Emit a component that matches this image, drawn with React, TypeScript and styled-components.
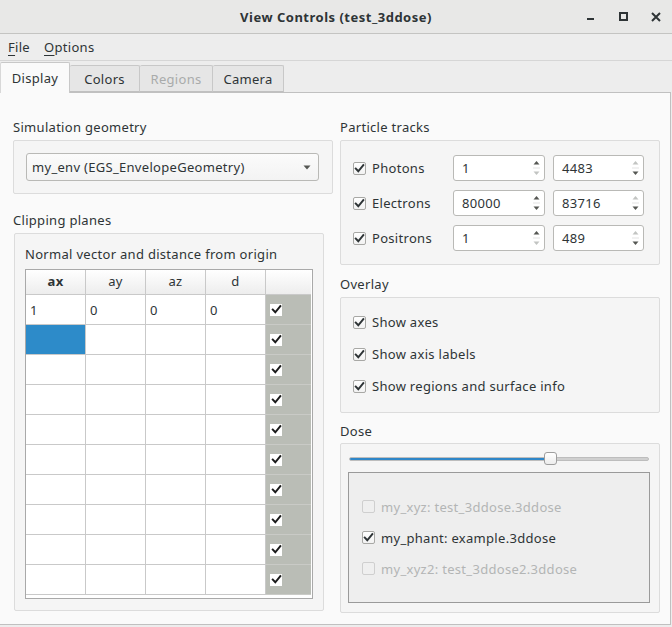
import React from "react";
import styled, { createGlobalStyle } from "styled-components";

const Global = createGlobalStyle`
  html, body { margin: 0; padding: 0; background: #ededed; }
  body {
    font-family: "Noto Sans", "DejaVu Sans", sans-serif;
    font-size: 13px;
    letter-spacing: 0.3px;
    color: #2e3436;
  }
  * { box-sizing: border-box; }
`;

const Window = styled.div`
  width: 672px;
  height: 627px;
  display: flex;
  flex-direction: column;
  background: #ededed;
`;

const TitleBar = styled.div`
  height: 34px;
  flex: none;
  display: grid;
  grid-template-columns: 1fr auto 1fr;
  align-items: center;
  background: #e8e8e7;
  border-bottom: 1px solid #c4c4c2;
`;

const Title = styled.div`
  grid-column: 2;
  font-weight: bold;
  font-size: 13px;
  letter-spacing: 0.5px;
  color: #2e3436;
`;

const WinButtons = styled.div`
  grid-column: 3;
  display: flex;
  justify-content: flex-end;
  align-items: center;
  height: 100%;
`;

const WinButton = styled.div`
  width: 32px;
  height: 100%;
  display: flex;
  align-items: center;
  justify-content: center;
`;

const MenuBar = styled.div`
  height: 27px;
  flex: none;
  display: flex;
  align-items: center;
  padding-left: 8px;
  gap: 14px;
  border-bottom: 1px solid #d6d6d6;
  background: #ededed;
`;

const MenuItem = styled.span`
  font-size: 13px;
  color: #2e3436;
  u { text-underline-offset: 3px; }
`;

const TabBar = styled.div`
  height: 31px;
  flex: none;
  display: flex;
  align-items: flex-end;
  position: relative;
  z-index: 1;
`;

const Tab = styled.div<{ $w: number; $active?: boolean; $disabled?: boolean }>`
  width: ${(p) => p.$w}px;
  height: ${(p) => (p.$active ? 31 : 27)}px;
  margin-bottom: ${(p) => (p.$active ? -1 : 0)}px;
  display: flex;
  align-items: center;
  justify-content: center;
  padding-top: ${(p) => (p.$active ? 0 : 1)}px;
  background: ${(p) => (p.$active ? "#fafafa" : "#e6e6e6")};
  border: 1px solid #c8c8c8;
  border-bottom: ${(p) => (p.$active ? "none" : "1px solid #c0c0c0")};
  border-left: ${(p) => (p.$active ? "1px solid #d8d8d8" : "none")};
  border-radius: 2px 2px 0 0;
  color: ${(p) => (p.$disabled ? "#a9abab" : "#2e3436")};
`;

const Pane = styled.div`
  width: 671px;
  height: 533px;
  flex: none;
  background: #fafafa;
  border: 1px solid #c0c0c0;
  border-left: none;
  display: flex;
  gap: 7px;
  padding: 25px 10px 0 13px;
  align-items: flex-start;
`;

const Column = styled.div`
  width: 320px;
  flex: none;
  display: flex;
  flex-direction: column;
`;

const SectionLabel = styled.div<{ $top?: number; $bottom?: number }>`
  height: 18px;
  line-height: 18px;
  margin-top: ${(p) => p.$top ?? 0}px;
  margin-bottom: ${(p) => p.$bottom ?? 4}px;
`;

const Group = styled.div<{ $pad: string; $ml?: number; $mr?: number }>`
  background: #f5f5f5;
  border: 1px solid #dcdcdc;
  border-radius: 2px;
  padding: ${(p) => p.$pad};
  margin-left: ${(p) => p.$ml ?? 0}px;
  margin-right: ${(p) => p.$mr ?? 0}px;
`;

const Combo = styled.div`
  height: 28px;
  border: 1px solid #b9b9b6;
  border-radius: 3px;
  background: linear-gradient(#fbfbfb, #f3f3f3);
  display: flex;
  align-items: center;
  justify-content: space-between;
  padding: 0 7px 0 5px;
`;

const InnerLabel = styled.div`
  height: 18px;
  line-height: 18px;
  margin-bottom: 6px;
`;

const Table = styled.div`
  height: 330px;
  border: 1px solid #a9a9a9;
  background: #ffffff;
  display: flex;
  flex-direction: column;
`;

const GridRow = styled.div<{ $h: number }>`
  display: grid;
  grid-template-columns: 60px 60px 60px 60px 45px;
  height: ${(p) => p.$h}px;
  flex: none;
`;

const HeadCell = styled.div<{ $bold?: boolean; $last?: boolean }>`
  display: flex;
  align-items: center;
  justify-content: center;
  background: linear-gradient(#ffffff, #ededed);
  border-right: ${(p) => (p.$last ? "none" : "1px solid #c9c9c9")};
  border-bottom: 1px solid #c9c9c9;
  font-weight: ${(p) => (p.$bold ? "bold" : "normal")};
  padding-bottom: 2px;
`;

const Cell = styled.div<{ $selected?: boolean }>`
  display: flex;
  align-items: center;
  padding-left: 4px;
  border-right: 1px solid #c9c9c9;
  border-bottom: 1px solid #c9c9c9;
  background: ${(p) => (p.$selected ? "#2d8bc9" : "#ffffff")};
`;

const CheckCell = styled.div`
  display: flex;
  align-items: center;
  padding-left: 4px;
  background: #babdb6;
  border-bottom: 1px solid #c9cac6;
`;

const TableCheck = styled.span`
  width: 12px;
  height: 12px;
  background: #ffffff;
  display: inline-flex;
  align-items: center;
  justify-content: center;
`;

const TrackRow = styled.div`
  display: flex;
  height: 26px;
  align-items: center;
`;

const TrackRows = styled.div`
  display: flex;
  flex-direction: column;
  gap: 9px;
`;

const TrackLabel = styled.div`
  width: 100px;
  flex: none;
`;

const CheckLine = styled.label<{ $disabled?: boolean }>`
  display: flex;
  align-items: center;
  gap: 6px;
  height: 20px;
  color: ${(p) => (p.$disabled ? "#b3b5b5" : "#2e3436")};
`;

const Box = styled.span<{ $disabled?: boolean }>`
  width: 13px;
  height: 13px;
  flex: none;
  border: 1px solid ${(p) => (p.$disabled ? "#cfcfcf" : "#a8a8a5")};
  border-radius: 2px;
  background: ${(p) => (p.$disabled ? "#efefef" : "linear-gradient(#ffffff, #f2f2f2)")};
  display: inline-flex;
  align-items: center;
  justify-content: center;
`;

const Spin = styled.div<{ $w: number; $ml: number }>`
  width: ${(p) => p.$w}px;
  margin-left: ${(p) => p.$ml}px;
  flex: none;
  height: 26px;
  border: 1px solid #b9b9b6;
  border-radius: 3px;
  background: #ffffff;
  display: flex;
  align-items: center;
  justify-content: space-between;
  padding-left: 8px;
`;

const SpinArrows = styled.div`
  width: 16px;
  height: 100%;
  display: flex;
  align-items: center;
  justify-content: center;
`;

const OverlayRows = styled.div`
  display: flex;
  flex-direction: column;
  gap: 12px;
`;

const SliderWrap = styled.div`
  position: relative;
  height: 13px;
  margin: 0 0 7px 1px;
  display: flex;
  align-items: center;
`;

const Groove = styled.div`
  width: 300px;
  height: 4px;
  border-radius: 2px;
  background: #cfcfcf;
  border: 1px solid #bdbdbd;
  overflow: hidden;
`;

const GrooveFill = styled.div`
  height: 100%;
  background: #2e86c8;
`;

const Handle = styled.div`
  position: absolute;
  top: 0;
  width: 13px;
  height: 13px;
  border: 1px solid #9e9e9e;
  border-radius: 3px;
  background: linear-gradient(#ffffff, #ededed);
`;

const DoseFrame = styled.div`
  height: 131px;
  border: 1px solid #9a9a9a;
  background: #eeeeee;
  display: flex;
  flex-direction: column;
  justify-content: center;
  gap: 11px;
  padding-left: 13px;
`;

const Check = ({ color = "#2e3436" }: { color?: string }) => (
  <svg width="11" height="11" viewBox="0 0 11 11">
    <path d="M1.8 5.6 L4.3 8.3 L9.3 2.2" fill="none" stroke={color} strokeWidth="2" strokeLinecap="square" />
  </svg>
);

const CheckBox = ({ checked, disabled }: { checked?: boolean; disabled?: boolean }) => (
  <Box $disabled={disabled}>{checked ? <Check /> : null}</Box>
);

const Arrows = ({ upOn, downOn }: { upOn: boolean; downOn: boolean }) => (
  <SpinArrows>
    <svg width="9" height="20" viewBox="0 0 9 20">
      <path d="M1.5 6.5 L4.5 3 L7.5 6.5 Z" fill={upOn ? "#555753" : "#c2c4c2"} />
      <path d="M1 10 H8" stroke="#e3e3e3" strokeWidth="1" />
      <path d="M1.5 13.5 L4.5 17 L7.5 13.5 Z" fill={downOn ? "#555753" : "#c2c4c2"} />
    </svg>
  </SpinArrows>
);

const tracks = [
  { name: "Photons", a: "1", b: "4483", arr: [[true, false], [false, true]] },
  { name: "Electrons", a: "80000", b: "83716", arr: [[true, true], [false, true]] },
  { name: "Positrons", a: "1", b: "489", arr: [[true, false], [false, true]] },
];

const rows = [["1", "0", "0", "0"], ...Array.from({ length: 9 }, () => ["", "", "", ""])];

export default function App() {
  return (
    <>
      <Global />
      <Window>
        <TitleBar>
          <Title>View Controls (test_3ddose)</Title>
          <WinButtons>
            <WinButton>
              <svg width="10" height="10" viewBox="0 0 10 10">
                <rect x="0" y="6" width="7" height="2" fill="#2e3436" />
              </svg>
            </WinButton>
            <WinButton>
              <svg width="10" height="10" viewBox="0 0 10 10">
                <rect x="1" y="1" width="7" height="7" fill="none" stroke="#2e3436" strokeWidth="2" />
              </svg>
            </WinButton>
            <WinButton>
              <svg width="10" height="10" viewBox="0 0 10 10">
                <path d="M1 1 L9 9 M9 1 L1 9" stroke="#2e3436" strokeWidth="2" />
              </svg>
            </WinButton>
          </WinButtons>
        </TitleBar>
        <MenuBar>
          <MenuItem><u>F</u>ile</MenuItem>
          <MenuItem><u>O</u>ptions</MenuItem>
        </MenuBar>
        <TabBar>
          <Tab $w={70} $active>Display</Tab>
          <Tab $w={70}>Colors</Tab>
          <Tab $w={73} $disabled>Regions</Tab>
          <Tab $w={71}>Camera</Tab>
        </TabBar>
        <Pane>
          <Column>
            <SectionLabel>Simulation geometry</SectionLabel>
            <Group $pad="12px 13px 12px 12px">
              <Combo>
                <span>my_env (EGS_EnvelopeGeometry)</span>
                <svg width="8" height="5" viewBox="0 0 8 5">
                  <path d="M0.5 0.5 L7.5 0.5 L4 4.5 Z" fill="#555753" />
                </svg>
              </Combo>
            </Group>
            <SectionLabel $top={17}>Clipping planes</SectionLabel>
            <Group $pad="11px 10px 11px 10px" $ml={1} $mr={9}>
              <InnerLabel>Normal vector and distance from origin</InnerLabel>
              <Table>
                <GridRow $h={25}>
                  <HeadCell $bold>ax</HeadCell>
                  <HeadCell>ay</HeadCell>
                  <HeadCell>az</HeadCell>
                  <HeadCell>d</HeadCell>
                  <HeadCell $last />
                </GridRow>
                {rows.map((r, i) => (
                  <GridRow $h={30} key={i}>
                    {r.map((v, j) => (
                      <Cell key={j} $selected={i === 1 && j === 0}>{v}</Cell>
                    ))}
                    <CheckCell>
                      <TableCheck><Check color="#1a1a1a" /></TableCheck>
                    </CheckCell>
                  </GridRow>
                ))}
              </Table>
            </Group>
          </Column>
          <Column>
            <SectionLabel>Particle tracks</SectionLabel>
            <Group $pad="14px 14px 13px 12px">
              <TrackRows>
                {tracks.map((t) => (
                  <TrackRow key={t.name}>
                    <TrackLabel>
                      <CheckLine><CheckBox checked />{t.name}</CheckLine>
                    </TrackLabel>
                    <Spin $w={92} $ml={0}><span>{t.a}</span><Arrows upOn={t.arr[0][0]} downOn={t.arr[0][1]} /></Spin>
                    <Spin $w={91} $ml={8}><span>{t.b}</span><Arrows upOn={t.arr[1][0]} downOn={t.arr[1][1]} /></Spin>
                  </TrackRow>
                ))}
              </TrackRows>
            </Group>
            <SectionLabel $top={10}>Overlay</SectionLabel>
            <Group $pad="14px 12px 16px 12px">
              <OverlayRows>
                <CheckLine><CheckBox checked />Show axes</CheckLine>
                <CheckLine><CheckBox checked />Show axis labels</CheckLine>
                <CheckLine><CheckBox checked />Show regions and surface info</CheckLine>
              </OverlayRows>
            </Group>
            <SectionLabel $top={9} $bottom={3}>Dose</SectionLabel>
            <Group $pad="8px 9px 9px 7px">
              <SliderWrap>
                <Groove><GrooveFill style={{ width: "67%" }} /></Groove>
                <Handle style={{ left: 195 }} />
              </SliderWrap>
              <DoseFrame>
                <CheckLine $disabled><CheckBox disabled />my_xyz: test_3ddose.3ddose</CheckLine>
                <CheckLine><CheckBox checked />my_phant: example.3ddose</CheckLine>
                <CheckLine $disabled><CheckBox disabled />my_xyz2: test_3ddose2.3ddose</CheckLine>
              </DoseFrame>
            </Group>
          </Column>
        </Pane>
      </Window>
    </>
  );
}
